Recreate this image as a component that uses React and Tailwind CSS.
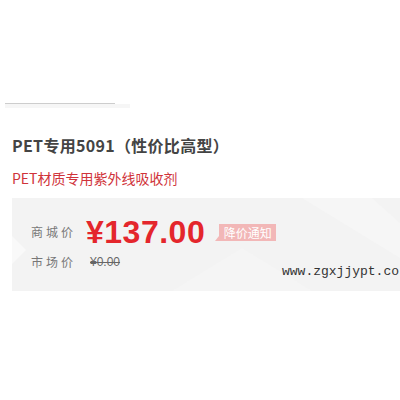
export default function App() {
  return (
    <div className="w-[400px] h-[400px] bg-white overflow-hidden relative font-['Liberation_Sans','Noto_Sans_CJK_SC',sans-serif]">
      <div className="pt-[103px]">
        <div className="ml-[5px] w-[110px] h-px bg-[#cdcdcd]" />
        <div className="ml-[5px] w-[125px] h-[4px] bg-[#f6f6f6]" />
      </div>
      <div className="ml-[12px] mt-[26px] text-[16px] leading-[22px] font-bold text-[#444] tracking-[0.3px] font-['Noto_Sans_CJK_SC',sans-serif]">
        PET专用5091（性价比高型）
      </div>
      <div className="ml-[12px] mt-[12px] text-[14px] leading-[20px] text-[#d0333a] font-['Noto_Sans_CJK_SC',sans-serif]">
        PET材质专用紫外线吸收剂
      </div>
      <div className="ml-[12px] mt-[10px] h-[93px] bg-[#f3f3f3] relative overflow-hidden">
        <svg className="absolute inset-0" width="388" height="93" viewBox="0 0 388 93">
          <polygon points="0,38 14,52 0,66" fill="#f9f9f9" />
          <polygon points="290,0 360,0 388,25 388,60" fill="#f6f6f6" />
          <polygon points="160,93 230,50 300,93" fill="#f5f5f5" />
        </svg>
        <div className="relative pt-[19px] pl-[19px]">
          <div className="flex items-center h-[30px]">
            <span className="w-[55px] text-[12px] tracking-[3px] text-[#777] font-['Noto_Sans_CJK_SC',sans-serif]">商城价</span>
            <span className="text-[32px] leading-[30px] font-bold text-[#e4262c] tracking-[0.5px]">¥137.00</span>
            <span className="relative ml-[14px] w-[57px] h-[17px] bg-[#f2b7b7] text-white text-[12px] leading-[17px] text-center font-['Noto_Sans_CJK_SC',sans-serif]">
              降价通知
              <span className="absolute left-[-4px] bottom-0 w-0 h-0 border-t-[5px] border-t-transparent border-r-[4px] border-r-[#f2b7b7]" />
            </span>
          </div>
          <div className="flex items-center mt-[8px] h-[14px]">
            <span className="w-[59px] text-[12px] tracking-[3px] text-[#777] font-['Noto_Sans_CJK_SC',sans-serif]">市场价</span>
            <span className="text-[12px] text-[#666] line-through">¥0.00</span>
          </div>
        </div>
        <div className="absolute left-[270px] top-[66px] text-[13px] leading-[16px] text-[#333] font-['Liberation_Mono',monospace] whitespace-nowrap">
          www.zgxjjypt.co
        </div>
      </div>
    </div>
  );
}
